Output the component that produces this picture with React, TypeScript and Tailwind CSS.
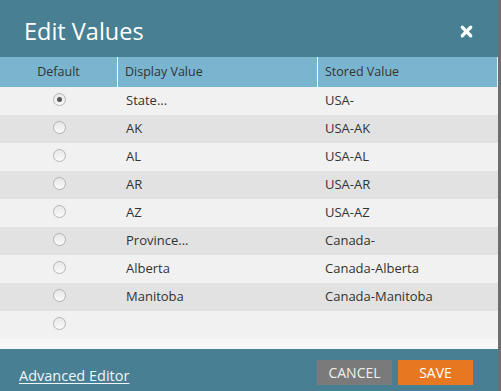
import { X } from 'lucide-react'

type Row = { display: string; stored: string; checked?: boolean }

const rows: Row[] = [
  { display: 'State...', stored: 'USA-', checked: true },
  { display: 'AK', stored: 'USA-AK' },
  { display: 'AL', stored: 'USA-AL' },
  { display: 'AR', stored: 'USA-AR' },
  { display: 'AZ', stored: 'USA-AZ' },
  { display: 'Province...', stored: 'Canada-' },
  { display: 'Alberta', stored: 'Canada-Alberta' },
  { display: 'Manitoba', stored: 'Canada-Manitoba' },
  { display: '', stored: '' },
]

function Radio({ checked }: { checked?: boolean }) {
  return (
    <span className="w-[13px] h-[13px] rounded-full border border-[#b5b5b5] bg-gradient-to-b from-[#e6e6e6] to-[#fbfbfb] flex items-center justify-center">
      {checked && <span className="w-[5px] h-[5px] rounded-full bg-[#555]" />}
    </span>
  )
}

export default function App() {
  return (
    <div className="w-[501px] h-[391px] bg-[#6e6e6e] flex" style={{ fontFamily: '"Open Sans", "Noto Sans", sans-serif' }}>
      <div className="w-[498px] h-full flex flex-col bg-[#f7f7f7]">
        {/* Title bar */}
        <header className="h-[57px] bg-[#487f92] flex items-center justify-between pl-6 pr-[23px] pt-[6px] shrink-0">
          <h1 className="text-white text-[23.5px] leading-none">Edit Values</h1>
          <X className="text-white" size={17} strokeWidth={4.5} />
        </header>

        {/* Column headers */}
        <div className="h-[30px] bg-[#7ab5d0] flex text-[12.5px] text-[#333] shrink-0 border-r border-[#e8f1f5]">
          <div className="w-[118px] flex items-center justify-center border-r border-white">Default</div>
          <div className="w-[200px] flex items-center pl-[7px] border-r border-white">Display Value</div>
          <div className="flex-1 flex items-center pl-[7px]">Stored Value</div>
        </div>

        {/* Rows */}
        <div className="flex-1">
          {rows.map((r, i) => (
            <div
              key={i}
              className={`h-[28px] flex text-[13px] text-[#333] ${i % 2 === 0 ? 'bg-[#f1f1f1]' : 'bg-[#e2e2e2]'}`}
            >
              <div className="w-[118px] flex items-center justify-center pb-[4px]">
                <Radio checked={r.checked} />
              </div>
              <div className="w-[200px] flex items-center pl-[8px]">{r.display}</div>
              <div className="flex-1 flex items-center pl-[7px]">{r.stored}</div>
            </div>
          ))}
        </div>

        {/* Footer */}
        <footer className="h-[42px] bg-[#487f92] flex items-center justify-between pl-[19px] pr-[25px] shrink-0">
          <a href="#" className="text-[#eef6f8] text-[14.5px] underline underline-offset-2 pt-[11px]">
            Advanced Editor
          </a>
          <div className="flex gap-[6px] pt-[4px]">
            <button className="w-[75px] h-[25px] bg-[#7a7a7a] text-[#f0f0f0] text-[14px] flex items-center justify-center">
              CANCEL
            </button>
            <button className="w-[75px] h-[25px] bg-[#e87722] text-white text-[14px] flex items-center justify-center">
              SAVE
            </button>
          </div>
        </footer>
      </div>
    </div>
  )
}
